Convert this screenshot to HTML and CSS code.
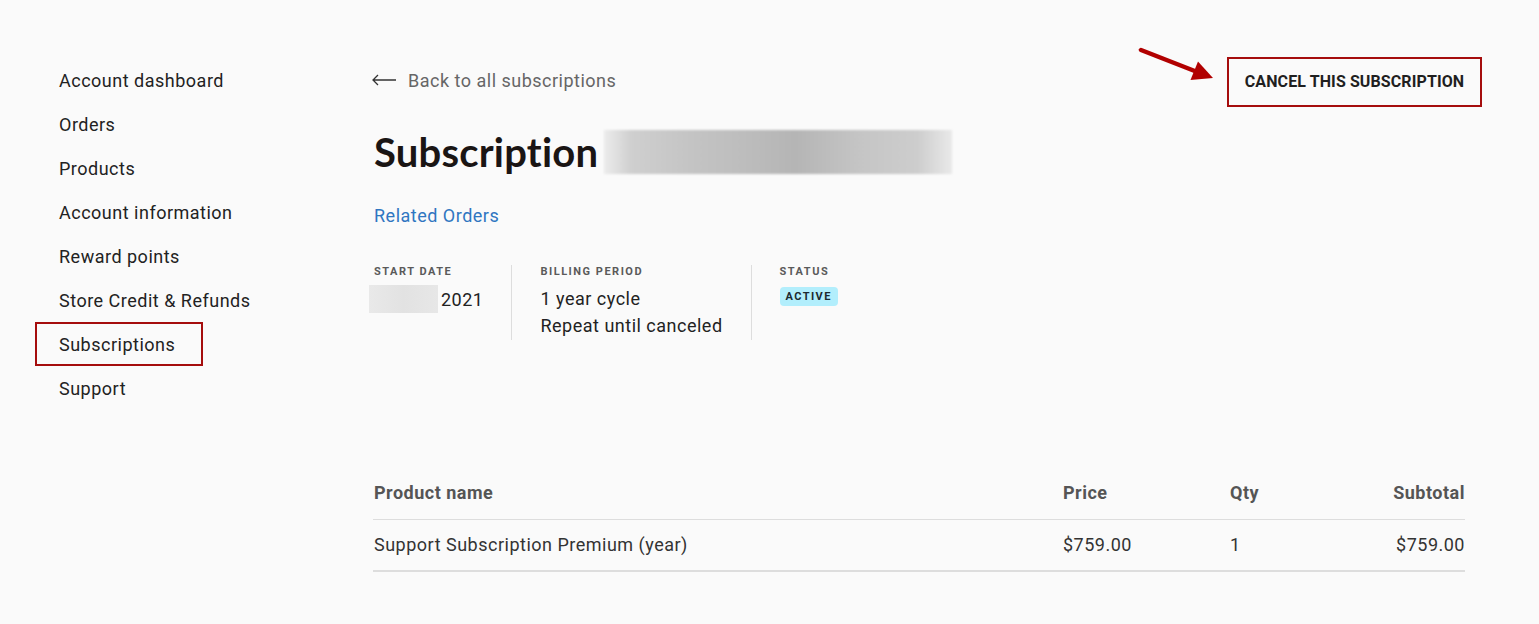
FILE: index.html
```html
<!DOCTYPE html>
<html lang="en">
<head>
    <meta charset="UTF-8">
    <title>Subscription</title>
    <link rel="stylesheet" href="styles.css">
</head>
<body>
    <div class="page">
        <!-- 左侧账户导航 -->
        <ul class="side-nav">
            <li><a href="javascript:;">Account dashboard</a></li>
            <li><a href="javascript:;">Orders</a></li>
            <li><a href="javascript:;">Products</a></li>
            <li><a href="javascript:;">Account information</a></li>
            <li><a href="javascript:;">Reward points</a></li>
            <li><a href="javascript:;">Store Credit &amp; Refunds</a></li>
            <li class="current"><a href="javascript:;">Subscriptions</a></li>
            <li><a href="javascript:;">Support</a></li>
        </ul>

        <div class="main">
            <div class="top-bar">
                <a class="back" href="javascript:;">
                    <svg width="26" height="12" viewBox="0 0 26 12"><path d="M25 6H2M7 1L2 6l5 5" fill="none" stroke="#333" stroke-width="1.3"/></svg>
                    Back to all subscriptions
                </a>
                <button class="cancel-btn">CANCEL THIS SUBSCRIPTION</button>
            </div>

            <h1 class="title">Subscription <span class="blurred"></span></h1>

            <a class="related" href="javascript:;">Related Orders</a>

            <div class="info">
                <div class="info-col">
                    <div class="label">START DATE</div>
                    <div class="value"><span class="date-blur"></span>2021</div>
                </div>
                <div class="info-col">
                    <div class="label">BILLING PERIOD</div>
                    <div class="value">1 year cycle</div>
                    <div class="value">Repeat until canceled</div>
                </div>
                <div class="info-col">
                    <div class="label">STATUS</div>
                    <span class="badge">ACTIVE</span>
                </div>
            </div>

            <div class="items">
                <div class="row head">
                    <div>Product name</div>
                    <div>Price</div>
                    <div>Qty</div>
                    <div class="right">Subtotal</div>
                </div>
                <div class="row">
                    <div>Support Subscription Premium (year)</div>
                    <div>$759.00</div>
                    <div>1</div>
                    <div class="right">$759.00</div>
                </div>
            </div>
        </div>
    </div>

    <!-- 标注箭头 -->
    <svg class="pointer" width="100" height="50" viewBox="0 0 100 50">
        <path d="M11 10L66 31.5" stroke="#b10000" stroke-width="4.5" stroke-linecap="round"/>
        <path d="M83 38L60.5 40L68 21.5Z" fill="#b10000"/>
    </svg>
</body>
</html>
```

FILE: styles.css
```css
*{
    margin: 0;
    padding: 0;
    box-sizing: border-box;
}
body{
    background-color: #fafafa;
    font-family: Roboto, "Liberation Sans", sans-serif;
    color: #222;
    letter-spacing: 0.5px;
}
a{
    text-decoration: none;
}
.page{
    display: flex;
    padding: 57px 74px 0 35px;
}

/* 侧边导航 */
.side-nav{
    list-style: none;
    width: 339px;
    flex-shrink: 0;
    padding-top: 1px;
}
.side-nav li{
    width: 168px;
    height: 44px;
    padding-left: 22px;
    line-height: 42px;
    font-size: 18px;
    white-space: nowrap;
    border: 2px solid transparent;
}
.side-nav a{
    color: #222;
}
.side-nav li.current{
    border-color: #a50d0d;
}

.main{
    flex: 1;
}
.top-bar{
    display: flex;
    justify-content: space-between;
    align-items: center;
    height: 49px;
}
.back{
    display: flex;
    align-items: center;
    gap: 11px;
    color: #666;
    font-size: 18px;
    margin-left: -3px;
    margin-top: -3px;
}
.cancel-btn{
    width: 255px;
    height: 50px;
    margin-right: -17px;
    background: transparent;
    border: 2px solid #a50d0d;
    font-family: Roboto, "Liberation Sans", sans-serif;
    font-weight: 700;
    font-size: 16px;
    color: #1f1f1f;
    letter-spacing: 0.1px;
}

.title{
    display: flex;
    align-items: center;
    margin-top: 22px;
    font-family: Lato, "Open Sans", sans-serif;
    font-weight: 700;
    font-size: 40px;
    line-height: 48px;
    letter-spacing: 0.2px;
    color: #1a1514;
}
.blurred{
    display: inline-block;
    width: 348px;
    height: 44px;
    margin-left: 6px;
    background: linear-gradient(90deg, #ececec 0%, #cfcfcf 8%, #c4c4c4 25%, #bdbdbd 40%, #b5b5b5 55%, #c6c6c6 75%, #cdcdcd 90%, #e9e9e9 100%);
    filter: blur(1px);
}

.related{
    display: inline-block;
    margin-top: 28px;
    font-size: 18px;
    line-height: 24px;
    color: #2f76c1;
}

.info{
    display: flex;
    margin-top: 37px;
}
.info-col{
    padding: 0 28px;
    height: 75px;
    border-left: 1px solid #ddd;
}
.info-col:first-child{
    padding-left: 0;
    border-left: none;
}
.label{
    font-size: 11px;
    line-height: 14px;
    font-weight: 700;
    letter-spacing: 1.5px;
    color: #5a5a5a;
    margin-bottom: 6px;
}
.value{
    font-size: 18px;
    line-height: 27px;
    color: #222;
    display: flex;
    align-items: center;
}
.date-blur{
    display: inline-block;
    width: 69px;
    height: 28px;
    margin-left: -5px;
    margin-right: 3px;
    background: linear-gradient(90deg, #e9e9e9, #e2e2e2 50%, #e7e7e7);
}
.badge{
    display: inline-block;
    margin-top: 1px;
    padding: 0 6px;
    height: 19px;
    line-height: 19px;
    border-radius: 4px;
    background-color: #b2eefc;
    font-size: 11px;
    font-weight: 700;
    letter-spacing: 1.4px;
    color: #1c2a30;
}

/* 商品表格 */
.items{
    margin-top: 127px;
    margin-left: -1px;
    border-bottom: 2px solid #ddd;
}
.row{
    display: grid;
    grid-template-columns: 689px 167px 1fr 120px;
    padding: 13px 0 13px 1px;
    font-size: 18px;
    line-height: 24px;
    color: #333;
}
.row.head{
    padding: 14px 0 14px 1px;
    font-weight: 700;
    color: #555;
    border-bottom: 1px solid #ddd;
}
.right{
    text-align: right;
}

.pointer{
    position: absolute;
    left: 1130px;
    top: 40px;
}
```
